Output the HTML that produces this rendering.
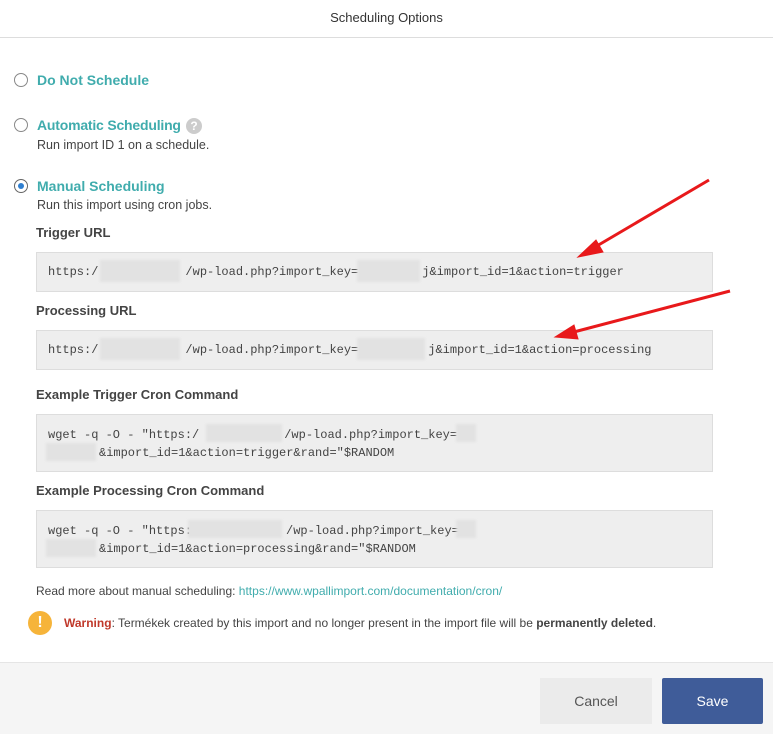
<!DOCTYPE html><html><head><meta charset="utf-8"><style>
body{margin:0;width:773px;height:733px;background:#fff;font-family:"Liberation Sans",sans-serif;position:relative;overflow:hidden;color:#444}
.a{position:absolute;white-space:nowrap}
.hd{left:0;top:0;width:773px;height:37px;border-bottom:1px solid #ddd;text-align:center;line-height:36px;font-size:13px;color:#333}
.r{width:14px;height:14px;border:1px solid #888;border-radius:50%;box-sizing:border-box;background:#fff}
.t{font-size:14px;font-weight:bold;color:#40acad}
.s{font-size:12.5px;color:#444}
.l{font-size:13px;font-weight:bold;color:#444}
.box{left:36px;width:677px;background:#eee;border:1px solid #ddd;box-sizing:border-box;font-family:"Liberation Mono",monospace;font-size:12px;color:#444;padding-left:11px}
.box span{display:inline-block}
.bl{position:absolute;background:#e2e2e2;filter:blur(1px)}
.ft{left:0;top:662px;width:773px;height:71px;background:#f5f5f5;border-top:1px solid #e5e5e5}
</style></head><body>
<div class="a hd">Scheduling Options</div>
<div class="a r" style="left:14px;top:73px"></div>
<div class="a t" style="left:37px;top:72px">Do Not Schedule</div>
<div class="a r" style="left:14px;top:118px"></div>
<div class="a t" style="left:37px;top:117px;letter-spacing:-0.2px">Automatic Scheduling</div>
<div class="a" style="left:186px;top:118px;width:16px;height:16px;border-radius:50%;background:#ccc;color:#fff;font-size:12px;font-weight:bold;text-align:center;line-height:16px">?</div>
<div class="a s" style="left:37px;top:138px">Run import ID 1 on a schedule.</div>
<div class="a r" style="left:14px;top:179px;border-color:#666"></div>
<div class="a" style="left:18px;top:183px;width:6px;height:6px;border-radius:50%;background:#2f7fd0"></div>
<div class="a t" style="left:37px;top:178px">Manual Scheduling</div>
<div class="a s" style="left:37px;top:198px">Run this import using cron jobs.</div>

<div class="a l" style="left:36px;top:225px">Trigger URL</div>
<div class="a box" style="top:252px;height:40px;line-height:38px">https:/<span style="width:87px"></span>/wp-load.php?import_key=<span style="width:64px"></span>j&amp;import_id=1&amp;action=trigger</div>
<div class="bl" style="left:100px;top:260px;width:80px;height:22px"></div>
<div class="bl" style="left:357px;top:260px;width:63px;height:22px"></div>

<div class="a l" style="left:36px;top:303px">Processing URL</div>
<div class="a box" style="top:330px;height:40px;line-height:38px">https:/<span style="width:87px"></span>/wp-load.php?import_key=<span style="width:70px"></span>j&amp;import_id=1&amp;action=processing</div>
<div class="bl" style="left:100px;top:338px;width:80px;height:22px"></div>
<div class="bl" style="left:357px;top:338px;width:68px;height:22px"></div>

<div class="a l" style="left:36px;top:387px">Example Trigger Cron Command</div>
<div class="a box" style="top:414px;height:58px;line-height:18px;padding-top:11px">wget -q -O - "https:/<span style="width:85px"></span>/wp-load.php?import_key=<br><span style="width:51px"></span>&amp;import_id=1&amp;action=trigger&amp;rand="$RANDOM</div>
<div class="bl" style="left:206px;top:424px;width:76px;height:18px"></div>
<div class="bl" style="left:456px;top:424px;width:20px;height:18px"></div>
<div class="bl" style="left:46px;top:443px;width:50px;height:18px"></div>

<div class="a l" style="left:36px;top:483px">Example Processing Cron Command</div>
<div class="a box" style="top:510px;height:58px;line-height:18px;padding-top:11px">wget -q -O - "https:<span style="width:94px"></span>/wp-load.php?import_key=<br><span style="width:51px"></span>&amp;import_id=1&amp;action=processing&amp;rand="$RANDOM</div>
<div class="bl" style="left:188px;top:520px;width:94px;height:18px"></div>
<div class="bl" style="left:456px;top:520px;width:20px;height:18px"></div>
<div class="bl" style="left:46px;top:539px;width:50px;height:18px"></div>

<div class="a" style="left:36px;top:584px;font-size:12px;color:#444">Read more about manual scheduling: <span style="color:#40acad">https://www.wpallimport.com/documentation/cron/</span></div>
<div class="a" style="left:28px;top:611px;width:24px;height:24px;border-radius:50%;background:#f6b43a;color:#fff;font-weight:bold;font-size:16px;text-align:center;line-height:24px">!</div>
<div class="a" style="left:64px;top:616px;font-size:12px;color:#444"><b style="color:#c0392b">Warning</b>: Termékek created by this import and no longer present in the import file will be <b>permanently deleted</b>.</div>

<svg class="a" style="left:0;top:0" width="773" height="733">
<g stroke="#e8191b" stroke-width="3" fill="#e8191b">
<line x1="709" y1="180" x2="590" y2="250"/>
<polygon points="578,257 596,240 603,252" stroke-width="1"/>
<line x1="730" y1="291" x2="570" y2="333"/>
<polygon points="555,337 574,325 578,339" stroke-width="1"/>
</g></svg>

<div class="a ft"></div>
<div class="a" style="left:540px;top:678px;width:112px;height:46px;background:#ebebeb;color:#555;font-size:14px;text-align:center;line-height:46px">Cancel</div>
<div class="a" style="left:662px;top:678px;width:101px;height:46px;background:#3f5c99;color:#fff;font-size:14px;text-align:center;line-height:46px;border-radius:2px">Save</div>
</body></html>
